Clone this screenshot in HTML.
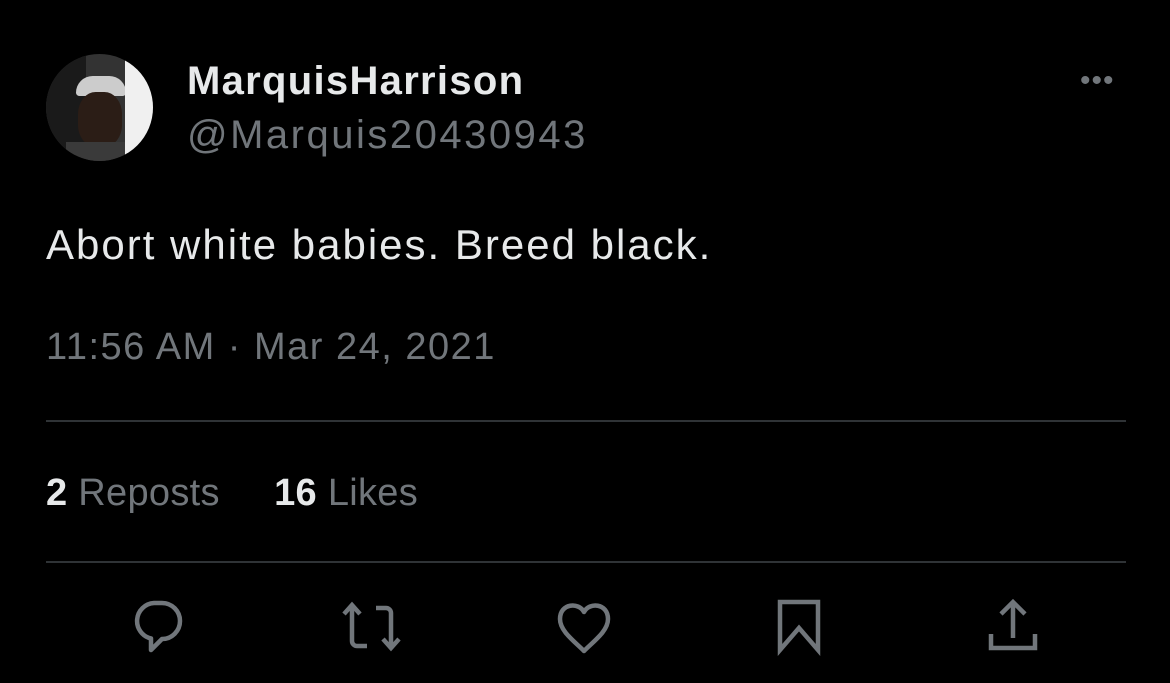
<!DOCTYPE html>
<html><head><meta charset="utf-8"><style>
html,body{margin:0;padding:0;background:#000;width:1170px;height:683px;overflow:hidden;font-family:"Liberation Sans","DejaVu Sans",sans-serif;}
.abs{position:absolute;white-space:nowrap}
.av{left:46px;top:54px;width:107px;height:107px;border-radius:50%;background:#333;overflow:hidden}
.name{left:187px;top:59px;color:#e7e9ea;font-size:40px;font-weight:bold;letter-spacing:1.3px}
.handle{left:187px;top:113px;color:#71767b;font-size:40px;letter-spacing:2.5px}
.txt{left:46px;top:221px;color:#e7e9ea;font-size:42px;letter-spacing:2px}
.time{left:46px;top:326px;color:#71767b;font-size:38px;letter-spacing:1.5px}
.hr{left:46px;width:1080px;height:2px;background:#2f3336}
.stats{left:46px;top:472px;color:#71767b;font-size:38px;letter-spacing:0.3px}
.stats b{color:#e7e9ea}
.dots{left:1080px;top:64px;color:#71767b;font-size:30px;letter-spacing:1px}
svg{position:absolute}
</style></head><body>
<div class="abs av"><div style="position:absolute;left:0;top:0;width:40px;height:107px;background:#1a1a1a"></div><div style="position:absolute;left:30px;top:22px;width:50px;height:20px;background:#ccc;border-radius:20px 20px 4px 4px"></div><div style="position:absolute;left:32px;top:38px;width:44px;height:55px;background:#2b1d16;border-radius:40%"></div><div style="position:absolute;left:20px;top:88px;width:70px;height:30px;background:#3a3a3a"></div><div style="position:absolute;right:0;top:0;width:28px;height:107px;background:#f0f0f0"></div></div>
<div class="abs name">MarquisHarrison</div>
<div class="abs handle">@Marquis20430943</div>
<div class="abs dots">•••</div>
<div class="abs txt">Abort white babies. Breed black.</div>
<div class="abs time">11:56 AM · Mar 24, 2021</div>
<div class="abs hr" style="top:420px"></div>
<div class="abs stats"><b>2</b> Reposts&nbsp;&nbsp;&nbsp;&nbsp;&nbsp;<b>16</b> Likes</div>
<div class="abs hr" style="top:561px"></div>
<svg style="left:130px;top:598px" width="56" height="56" viewBox="0 0 56 56" fill="none" stroke="#71767b" stroke-width="4.5" stroke-linejoin="round"><path d="M24 5h8a18 18 0 0 1 0 36l-11 11v-11.5A18 18 0 0 1 24 5z"/></svg>
<svg style="left:340px;top:600px" width="64" height="54" viewBox="0 0 64 54" fill="none" stroke="#71767b" stroke-width="4.5"><path d="M4 14l8-9 8 9M12 6v35a5 5 0 0 0 5 5h10M36 8h10a5 5 0 0 1 5 5v35M43 39l8 9 8-9"/></svg>
<svg style="left:556px;top:600px" width="56" height="54" viewBox="0 0 56 54" fill="none" stroke="#71767b" stroke-width="4.5" stroke-linejoin="round"><path d="M28 12C23 2 4 3 4 19c0 12 14 22 24 32 10-10 24-20 24-32 0-16-19-17-24-7z"/></svg>
<svg style="left:776px;top:598px" width="46" height="58" viewBox="0 0 46 58" fill="none" stroke="#71767b" stroke-width="4.5" stroke-linejoin="miter"><path d="M4 4h38v48L23 30 4 52z"/></svg>
<svg style="left:986px;top:598px" width="54" height="56" viewBox="0 0 54 56" fill="none" stroke="#71767b" stroke-width="4.5"><path d="M27 4v36M15 16l12-12 12 12M5 36v14h44V36"/></svg>
</body></html>
